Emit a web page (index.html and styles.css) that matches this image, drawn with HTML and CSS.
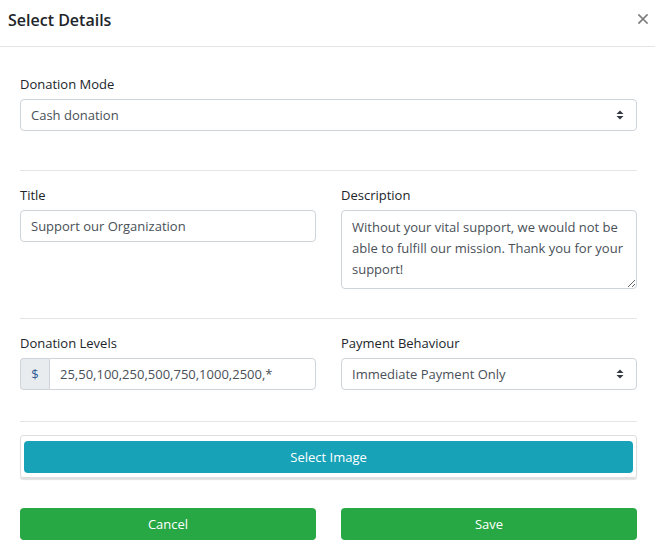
FILE: index.html
```html
<!DOCTYPE html>
<html>
<head>
<meta charset="utf-8">
<link rel="stylesheet" href="styles.css">
</head>
<body>
<div class="modal">
  <div class="modal-header">
    <h5 class="modal-title">Select Details</h5>
    <svg class="close" width="10" height="10" viewBox="0 0 10 10" aria-label="Close"><path d="M1 1 L9 9 M9 1 L1 9" stroke="#7c7c7c" stroke-width="1.7" stroke-linecap="square"/></svg>
  </div>
  <div class="modal-body">
    <section class="section first">
      <div class="field">
        <label class="label">Donation Mode</label>
        <div class="select">
          <span>Cash donation</span>
          <svg class="arrows" width="8" height="10" viewBox="0 0 8 10"><path d="M4 0.5 L7.5 4 H0.5 Z M4 9.5 L7.5 6 H0.5 Z" fill="#343a40"/></svg>
        </div>
      </div>
    </section>
    <hr class="divider">
    <section class="section grid">
      <div class="field">
        <label class="label">Title</label>
        <div class="input">Support our Organization</div>
      </div>
      <div class="field">
        <label class="label">Description</label>
        <textarea class="textarea" rows="3">Without your vital support, we would not be able to fulfill our mission. Thank you for your support!</textarea>
      </div>
    </section>
    <hr class="divider">
    <section class="section grid last">
      <div class="field">
        <label class="label">Donation Levels</label>
        <div class="input-group">
          <span class="addon">$</span>
          <div class="input grouped">25,50,100,250,500,750,1000,2500,*</div>
        </div>
      </div>
      <div class="field">
        <label class="label">Payment Behaviour</label>
        <div class="select">
          <span>Immediate Payment Only</span>
          <svg class="arrows" width="8" height="10" viewBox="0 0 8 10"><path d="M4 0.5 L7.5 4 H0.5 Z M4 9.5 L7.5 6 H0.5 Z" fill="#343a40"/></svg>
        </div>
      </div>
    </section>
    <hr class="divider">
    <div class="image-card">
      <div class="btn btn-info">Select Image</div>
    </div>
    <div class="actions">
      <div class="btn btn-success">Cancel</div>
      <div class="btn btn-success">Save</div>
    </div>
  </div>
</div>
</body>
</html>
```
FILE: styles.css
```css
* { box-sizing: border-box; }
html, body { margin: 0; padding: 0; background: #fff; }
body {
  font-family: "Open Sans", "Noto Sans", sans-serif;
  font-size: 13px;
  line-height: 21px;
  color: #212529;
  width: 655px;
  height: 546px;
  overflow: hidden;
}
.modal { width: 655px; }
.modal-header {
  display: flex;
  justify-content: space-between;
  align-items: flex-start;
  height: 47px;
  padding: 7px 7px 0 8px;
  border-bottom: 1px solid #e3e5e8;
}
.modal-title {
  margin: 0;
  font-size: 16px;
  font-weight: 600;
  line-height: 26px;
  color: #212529;
}
.close {
  display: block;
  margin-top: 7px;
}
.modal-body { padding: 27px 18px 0 20px; }
.section { display: block; }
.section.first { padding-bottom: 39px; }
.grid {
  display: grid;
  grid-template-columns: 296px 296px;
  column-gap: 25px;
  align-items: start;
  padding-top: 1px;
  padding-bottom: 29px;
}
.grid.last { padding-bottom: 31px; }
.field { display: flex; flex-direction: column; }
.label {
  display: block;
  line-height: 21px;
  margin-bottom: 4px;
  color: #212529;
}
.divider {
  margin: 0 0 13px 0;
  border: 0;
  border-top: 1px solid #e4e4e4;
  width: 617px;
}
.select, .input, .textarea {
  border: 1px solid #ced4da;
  border-radius: 4px;
  color: #495057;
  background: #fff;
  font-family: inherit;
  font-size: 13px;
  line-height: 21px;
}
.select {
  display: flex;
  align-items: center;
  justify-content: space-between;
  height: 32px;
  padding: 0 12px 0 10px;
}
.arrows { display: block; }
.input {
  height: 32px;
  padding: 5px 10px 4px;
}
.textarea {
  display: block;
  width: 296px;
  height: 79px;
  padding: 6px 10px 5px;
  margin: 0;
  resize: vertical;
  outline: none;
  overflow: hidden;
}
.input-group { display: flex; }
.addon {
  width: 29px;
  height: 32px;
  display: flex;
  align-items: center;
  justify-content: center;
  background: #e9ecef;
  border: 1px solid #ced4da;
  border-right: 0;
  border-radius: 4px 0 0 4px;
  color: #2d5b97;
}
.input.grouped {
  flex: 1;
  border-radius: 0 4px 4px 0;
  padding-left: 10px;
}
.image-card {
  width: 617px;
  padding: 5px 3px 4px 3px;
  border: 1px solid #dedede;
  border-radius: 3px;
  box-shadow: 0 2px 1px rgba(0,0,0,0.12);
}
.btn {
  display: flex;
  align-items: center;
  justify-content: center;
  height: 32px;
  border-radius: 4px;
  color: #fff;
  font-size: 13px;
}
.btn-info { background: #17a2b8; }
.btn-success { background: #28a745; }
.actions {
  display: grid;
  grid-template-columns: 296px 296px;
  column-gap: 25px;
  margin-top: 30px;
}
```
